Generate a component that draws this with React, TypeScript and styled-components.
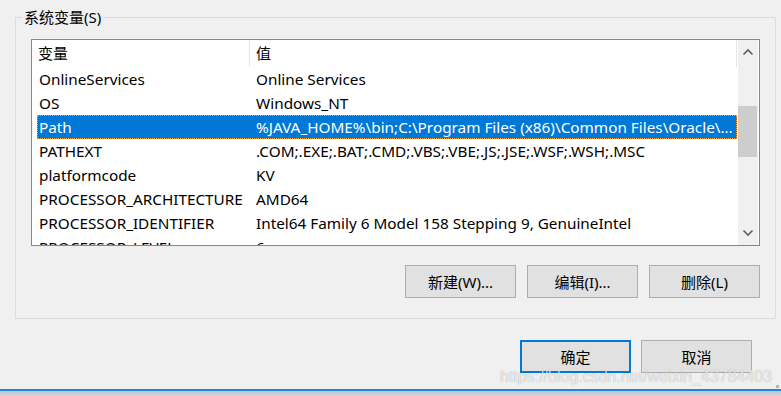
import React from 'react';
import styled, { createGlobalStyle } from 'styled-components';

const GlobalStyle = createGlobalStyle`
  html, body {
    margin: 0;
    padding: 0;
    background: #f0f0f0;
  }
  body {
    font-family: 'Noto Sans', 'Noto Sans CJK SC', sans-serif;
    font-size: 15px;
    color: #000;
  }
`;

const Dialog = styled.div`
  position: relative;
  width: 781px;
  height: 396px;
  display: flex;
  flex-direction: column;
  background: #f0f0f0;
  overflow: hidden;
`;

const GroupBox = styled.fieldset`
  box-sizing: border-box;
  width: 761px;
  margin: 7px 0 0 15px;
  padding: 0 15px 20px 15px;
  border: 1px solid #dcdcdc;
  min-width: 0;
`;

const Legend = styled.legend`
  margin-left: -9px;
  padding: 0 2px;
  line-height: 20px;
  font-size: 15px;
`;

const ListView = styled.div`
  box-sizing: border-box;
  margin-top: 12px;
  height: 207px;
  border: 1px solid #828790;
  background: #fff;
  display: flex;
  overflow: hidden;
`;

const ListBody = styled.div`
  width: 706px;
  flex: none;
  overflow: hidden;
`;

const HeaderRow = styled.div`
  display: grid;
  grid-template-columns: 218px 487px;
  height: 27px;
`;

const HeaderCell = styled.div<{ $pad: number }>`
  box-sizing: border-box;
  padding-left: ${(p) => p.$pad}px;
  border-right: 1px solid #e5e5e5;
  line-height: 27px;
  white-space: nowrap;
`;

const Row = styled.div<{ $selected?: boolean }>`
  box-sizing: border-box;
  display: grid;
  grid-template-columns: 212px 488px;
  margin-left: 5px;
  width: 700px;
  height: 24px;
  line-height: 22px;
  font-size: 15.3px;
  background: ${(p) => (p.$selected ? '#0078d7' : 'transparent')};
  color: ${(p) => (p.$selected ? '#fff' : '#000')};
  border: 1px ${(p) => (p.$selected ? 'dotted #f0a040' : 'solid transparent')};
`;

const Cell = styled.div<{ $pad: number }>`
  padding-left: ${(p) => p.$pad}px;
  padding-right: 4px;
  white-space: nowrap;
  overflow: hidden;
  text-overflow: ellipsis;
`;

const ScrollBar = styled.div`
  width: 20px;
  flex: none;
  background: #f0f0f0;
  display: flex;
  flex-direction: column;
  align-items: stretch;
`;

const ScrollArrow = styled.div`
  height: 24px;
  display: flex;
  align-items: center;
  justify-content: center;
`;

const ScrollTrack = styled.div`
  flex: 1;
  padding-top: 42px;
`;

const ScrollThumb = styled.div`
  width: 19px;
  height: 51px;
  background: #cdcdcd;
`;

const ButtonRow = styled.div<{ $gap: number }>`
  display: flex;
  justify-content: flex-end;
  gap: ${(p) => p.$gap}px;
`;

const GroupButtons = styled(ButtonRow)`
  margin-top: 19px;
`;

const DialogButtons = styled(ButtonRow)`
  margin: 21px 29px 0 0;
`;

const Button = styled.button<{ $default?: boolean }>`
  box-sizing: border-box;
  width: 111px;
  height: 33px;
  padding: 0;
  font-family: 'Noto Sans', 'Noto Sans CJK SC', sans-serif;
  font-size: 15px;
  color: #000;
  background: #e1e1e1;
  border: ${(p) => (p.$default ? '2px solid #0078d7' : '1px solid #adadad')};
  border-radius: 0;
`;

const Footer = styled.div`
  margin-top: auto;
  height: 5px;
  border-top: 2px solid #1a86e0;
  background: linear-gradient(#c4c4c4, #d6d6d6);
`;

const Grip = styled.div`
  position: absolute;
  right: 2px;
  bottom: 8px;
  width: 3px;
  height: 3px;
  background: #b4b4b4;
`;

const Watermark = styled.div`
  position: absolute;
  left: 500px;
  top: 368px;
  font-family: 'Liberation Sans', Arial, sans-serif;
  font-size: 16px;
  color: rgba(255, 255, 255, 0.75);
  text-shadow: 0 0 1px rgba(0, 0, 0, 0.35);
  white-space: nowrap;
  pointer-events: none;
`;

const Chevron = ({ up }: { up?: boolean }) => (
  <svg width="12" height="8" viewBox="0 0 12 8">
    <path
      d={up ? 'M1.5 6.5 L6 2 L10.5 6.5' : 'M1.5 1.5 L6 6 L10.5 1.5'}
      fill="none"
      stroke="#606060"
      strokeWidth="1.6"
    />
  </svg>
);

const variables: { name: string; value: string }[] = [
  { name: 'OnlineServices', value: 'Online Services' },
  { name: 'OS', value: 'Windows_NT' },
  {
    name: 'Path',
    value:
      '%JAVA_HOME%\\bin;C:\\Program Files (x86)\\Common Files\\Oracle\\Java\\javapath;C:\\Windows\\system32',
  },
  { name: 'PATHEXT', value: '.COM;.EXE;.BAT;.CMD;.VBS;.VBE;.JS;.JSE;.WSF;.WSH;.MSC' },
  { name: 'platformcode', value: 'KV' },
  { name: 'PROCESSOR_ARCHITECTURE', value: 'AMD64' },
  { name: 'PROCESSOR_IDENTIFIER', value: 'Intel64 Family 6 Model 158 Stepping 9, GenuineIntel' },
  { name: 'PROCESSOR_LEVEL', value: '6' },
];

const App = () => {
  const selected = 'Path';

  return (
    <>
      <GlobalStyle />
      <Dialog>
        <GroupBox>
          <Legend>系统变量(S)</Legend>
          <ListView>
            <ListBody>
              <HeaderRow>
                <HeaderCell $pad={6}>变量</HeaderCell>
                <HeaderCell $pad={6}>值</HeaderCell>
              </HeaderRow>
              {variables.map((v) => (
                <Row key={v.name} $selected={v.name === selected}>
                  <Cell $pad={1}>{v.name}</Cell>
                  <Cell $pad={6}>{v.value}</Cell>
                </Row>
              ))}
            </ListBody>
            <ScrollBar>
              <ScrollArrow>
                <Chevron up />
              </ScrollArrow>
              <ScrollTrack>
                <ScrollThumb />
              </ScrollTrack>
              <ScrollArrow>
                <Chevron />
              </ScrollArrow>
            </ScrollBar>
          </ListView>
          <GroupButtons $gap={11}>
            <Button>新建(W)...</Button>
            <Button>编辑(I)...</Button>
            <Button>删除(L)</Button>
          </GroupButtons>
        </GroupBox>
        <DialogButtons $gap={10}>
          <Button $default>确定</Button>
          <Button>取消</Button>
        </DialogButtons>
        <Footer />
        <Grip />
        <Watermark>https://blog.csdn.net/weixin_43784403</Watermark>
      </Dialog>
    </>
  );
};

export default App;
